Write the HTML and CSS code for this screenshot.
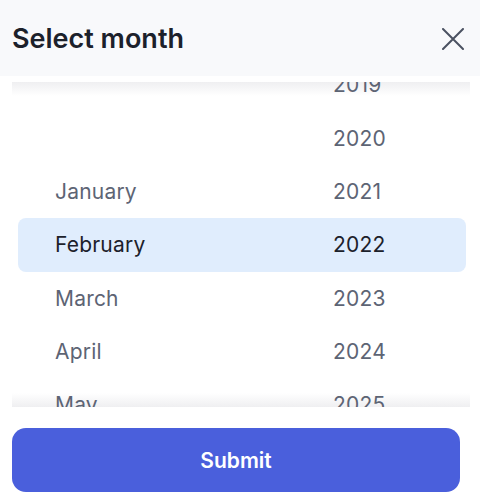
FILE: index.html
```html
<!DOCTYPE html>
<html>
<head>
<meta charset="utf-8">
<link rel="stylesheet" href="styles.css">
</head>
<body>
<div class="sheet">
  <header class="header">
    <h1 class="title">Select month</h1>
    <button class="close" aria-label="Close">
      <svg width="22" height="22" viewBox="0 0 22 22"><path d="M1 1L21 21M21 1L1 21" stroke="#4b5261" stroke-width="2" fill="none" stroke-linecap="round"/></svg>
    </button>
  </header>
  <div class="picker">
    <div class="list">
      <div class="row"><span class="m"></span><span class="y">2019</span></div>
      <div class="row"><span class="m"></span><span class="y">2020</span></div>
      <div class="row"><span class="m">January</span><span class="y">2021</span></div>
      <div class="row selected"><span class="m">February</span><span class="y">2022</span></div>
      <div class="row"><span class="m">March</span><span class="y">2023</span></div>
      <div class="row"><span class="m">April</span><span class="y">2024</span></div>
      <div class="row"><span class="m">May</span><span class="y">2025</span></div>
    </div>
  </div>
  <div class="footer">
    <button class="submit">Submit</button>
  </div>
</div>
</body>
</html>
```
FILE: styles.css
```css
* { box-sizing: border-box; }
html, body { margin: 0; padding: 0; background: #ffffff; }
body { font-family: Inter, "Noto Sans", sans-serif; width: 480px; height: 500px; overflow: hidden; }
.sheet { display: flex; flex-direction: column; }
.header {
  height: 76px;
  background: #f8f9fb;
  display: flex;
  align-items: center;
  justify-content: space-between;
  padding: 0 16px 0 12px;
}
.title {
  margin: 0;
  font-size: 27px;
  font-weight: 600;
  color: #1c212b;
  letter-spacing: 0;
}
.close {
  border: 0;
  background: transparent;
  padding: 0;
  width: 22px;
  height: 22px;
  display: flex;
  margin-top: 2px;
}
.picker {
  margin: 6px 10px 0 12px;
  height: 325px;
  overflow: hidden;
  background: linear-gradient(to bottom, #efeff1 0, #ffffff 14px, #ffffff calc(100% - 14px), #efeff1 100%);
}
.list { margin-top: -23.7px; }
.row {
  height: 53.33px;
  display: grid;
  grid-template-columns: 278px 1fr;
  align-items: center;
  font-size: 21px;
  color: #5d6474;
  margin: 0 4px 0 6px;
  padding-left: 37px;
  letter-spacing: 0.2px;
}
.row.selected {
  background: #e0edfd;
  border-radius: 8px;
  color: #1c212b;
}
.footer { padding: 21px 20px 0 12px; }
.submit {
  width: 448px;
  height: 64px;
  border: 0;
  border-radius: 14px;
  background: #4a5fdc;
  color: #ffffff;
  font-family: Inter, "Noto Sans", sans-serif;
  font-size: 21px;
  font-weight: 600;
}
```
